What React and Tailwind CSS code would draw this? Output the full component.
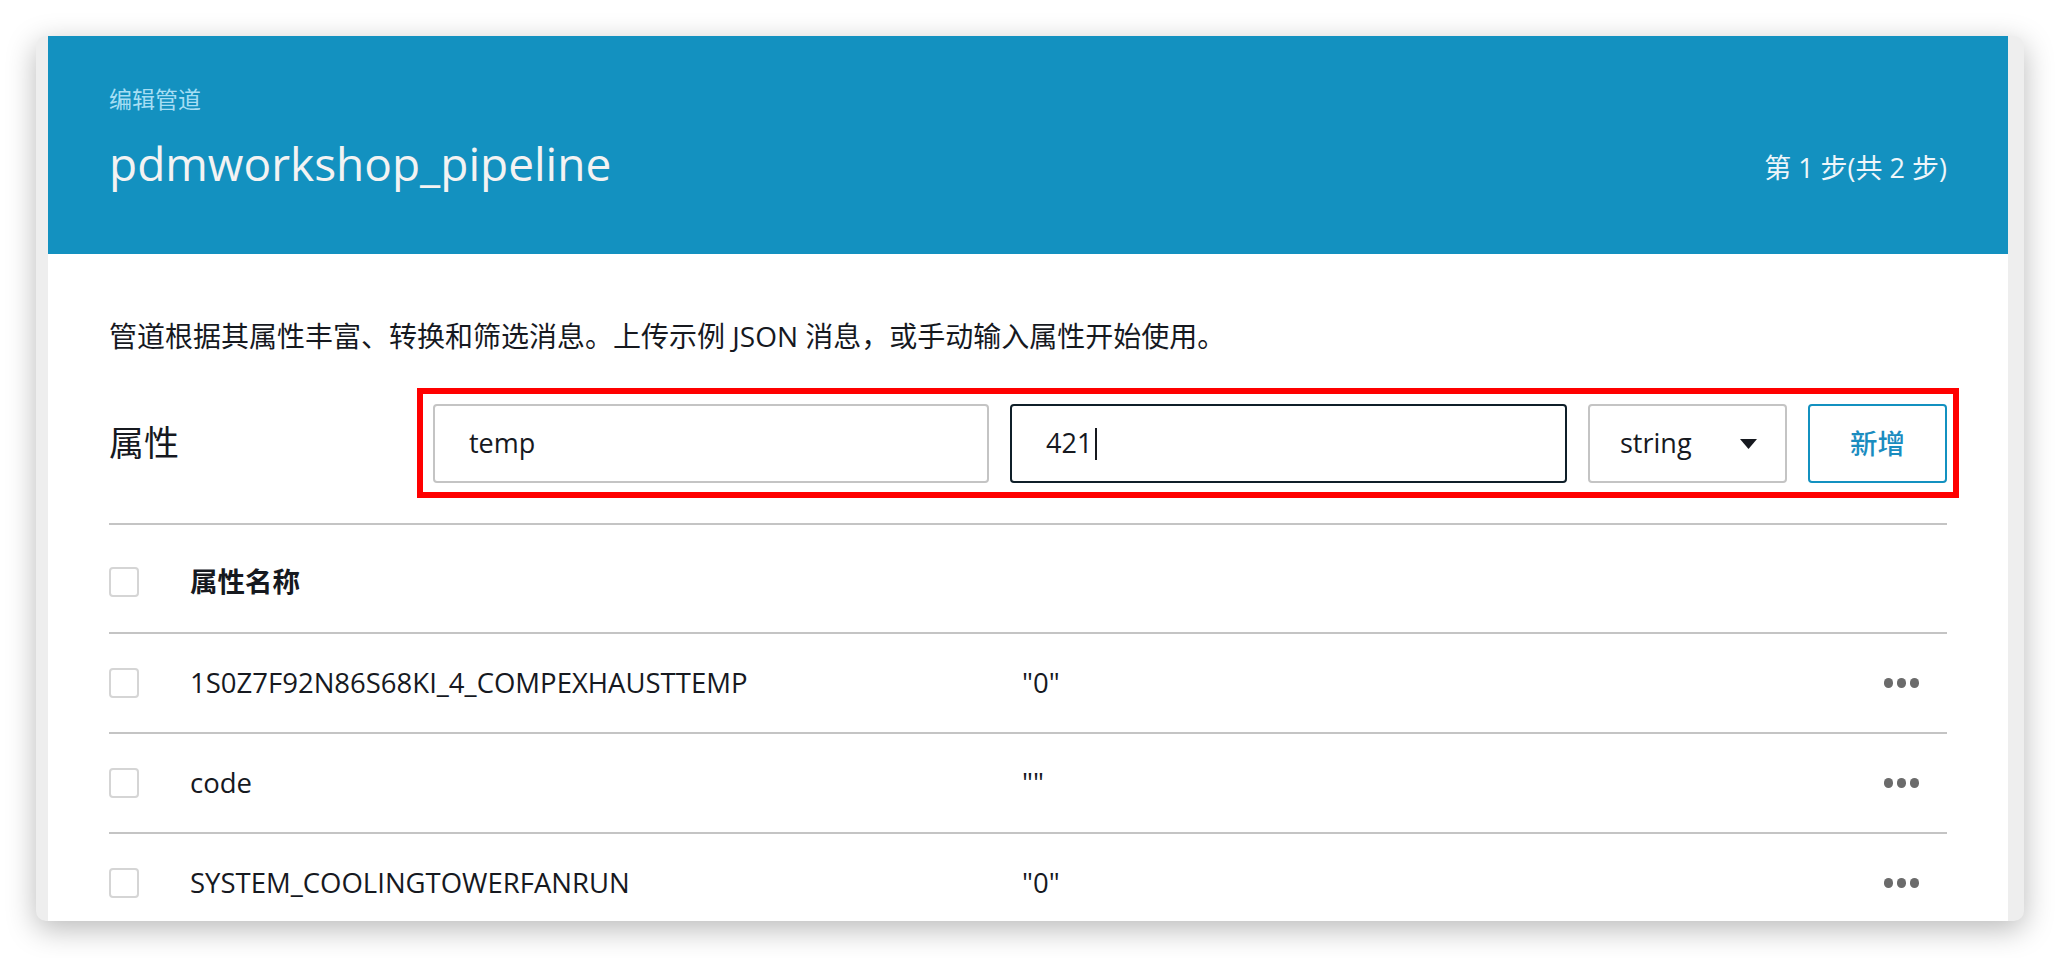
const font = "font-['Open_Sans','Noto_Sans_CJK_SC',sans-serif]";

const rows = [
    { name: '1S0Z7F92N86S68KI_4_COMPEXHAUSTTEMP', value: '"0"' },
    { name: 'code', value: '""' },
    { name: 'SYSTEM_COOLINGTOWERFANRUN', value: '"0"' },
];

function Checkbox() {
    return <div className="w-[30px] h-[30px] rounded-[4px] border-2 border-[#d5d5d5] bg-white shrink-0" />;
}

function Dots() {
    return (
        <div className="flex items-center gap-[4px]">
            <span className="w-[9px] h-[10px] rounded-full bg-[#6b6b6b]" />
            <span className="w-[9px] h-[10px] rounded-full bg-[#6b6b6b]" />
            <span className="w-[9px] h-[10px] rounded-full bg-[#6b6b6b]" />
        </div>
    );
}

export default function App() {
    return (
        <div className={`min-h-screen bg-white pt-[36px] pl-[36px] ${font}`}>
            <div className="w-[1988px] h-[885px] rounded-[10px] bg-[#eeeeee] pl-[12px] pr-[16px] overflow-hidden shadow-[0_8px_30px_rgba(0,0,0,0.28)]">
                <div className="h-full bg-white overflow-hidden">
                    {/* Header */}
                    <div className="h-[218px] bg-[#1391c0] px-[61px] pt-[44px] flex justify-between items-start">
                        <div>
                            <div className="text-[23px] leading-[38px] text-[#a6def4]">编辑管道</div>
                            <div className="mt-[17px] text-[46px] leading-[56px] text-[#f3f3f3]">pdmworkshop_pipeline</div>
                        </div>
                        <div className="mt-[70px] text-[27px] leading-[36px] text-[#eef6fa]">第 1 步(共 2 步)</div>
                    </div>

                    {/* Body */}
                    <div className="px-[61px] pt-[62px] text-[#16191f]">
                        <p className="text-[28px] leading-[40px]">管道根据其属性丰富、转换和筛选消息。上传示例 JSON 消息，或手动输入属性开始使用。</p>

                        <div className="mt-[32px] flex items-center">
                            <div className="w-[308px] shrink-0 text-[35px] leading-[44px]">属性</div>
                            <div className="w-[1542px] shrink-0 border-[6px] border-[#ff0000] pl-[10px] pr-[6px] pt-[10px] pb-[9px] flex gap-[21px]">
                                <div className="w-[556px] h-[79px] rounded-[4px] border-2 border-[#c4c4c4] flex items-center pl-[34px] text-[27px]">temp</div>
                                <div className="w-[557px] h-[79px] rounded-[4px] border-2 border-[#0f1f29] flex items-center pl-[34px] text-[27px]">
                                    421<span className="inline-block w-[2px] h-[32px] bg-[#16191f] ml-[3px]" />
                                </div>
                                <div className="w-[199px] h-[79px] rounded-[4px] border-2 border-[#c4c4c4] flex items-center justify-between pl-[30px] pr-[28px] text-[27px]">
                                    string
                                    <svg width="17" height="10" viewBox="0 0 17 10"><polygon points="0,0 17,0 8.5,10" fill="#16191f" /></svg>
                                </div>
                                <div className="w-[139px] h-[79px] rounded-[4px] border-2 border-[#1391c0] flex items-center justify-center text-[27.5px] font-medium text-[#1a8cbf]">新增</div>
                            </div>
                        </div>

                        <div className="mt-[25px] border-t-2 border-[#c4c4c4]">
                            <div className="h-[107px] pt-[6px] flex items-center">
                                <Checkbox />
                                <div className="ml-[51px] text-[27.5px] font-bold">属性名称</div>
                            </div>
                            {rows.map(row => (
                                <div key={row.name} className="h-[100px] border-t-2 border-[#c4c4c4] flex items-center text-[27.5px]">
                                    <Checkbox />
                                    <div className="ml-[51px] w-[832px]">{row.name}</div>
                                    <div className="flex-1">{row.value}</div>
                                    <div className="mr-[28px]"><Dots /></div>
                                </div>
                            ))}
                        </div>
                    </div>
                </div>
            </div>
        </div>
    );
}
